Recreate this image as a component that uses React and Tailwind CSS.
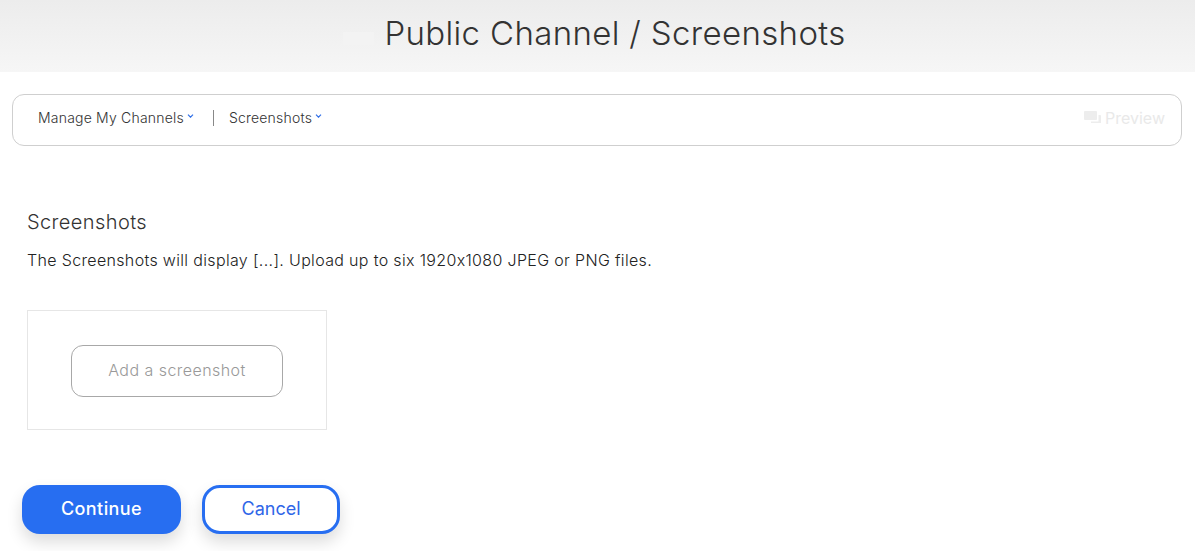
import React from 'react';

const Caret = () => (
  <svg className="ml-[3px] mt-[-3px] h-[4px] w-[7px] text-[#2f6fe8]" viewBox="0 0 7 4" fill="none" stroke="currentColor" strokeWidth="1.2">
    <path d="M1 0.7 3.5 3.2 6 0.7" />
  </svg>
);

const PreviewIcon = () => (
  <svg className="h-[13px] w-[17px] text-[#ededed]" viewBox="0 0 17 13" fill="currentColor">
    <path d="M1 0h11a1 1 0 0 1 1 1v7a1 1 0 0 1-1 1H1a1 1 0 0 1-1-1V1a1 1 0 0 1 1-1z" />
    <path d="M14.5 4H16a1 1 0 0 1 1 1v7H7v-1.5h7.5z" />
  </svg>
);

export default function App() {
  return (
    <div className="h-[551px] w-[1195px] overflow-hidden bg-white font-['Inter','Liberation_Sans',sans-serif] text-[#2d2d2d] [font-feature-settings:'calt'_0]">
      <header className="flex h-[72px] items-start justify-center bg-gradient-to-b from-[#ececec] to-[#f6f6f6] pr-[6px]">
        <div className="mt-[32px] mr-[10px] h-[13px] w-[31px] bg-[#f3f3f3]" />
        <h1 className="mt-[13px] text-[33px] font-light leading-[40px] tracking-[0.35px] text-[#333]">Public Channel / Screenshots</h1>
      </header>

      <nav className="ml-[12px] mr-[13px] mt-[22px] flex h-[52px] items-center justify-between rounded-[12px] border border-[#cfcfcf] pl-[25px] pr-[16px]">
        <div className="mt-[-5px] flex items-center text-[14px] font-light tracking-[0.2px] text-[#333]">
          <span className="flex items-center">Manage My Channels<Caret /></span>
          <span className="ml-[19px] mr-[15px] h-[16px] w-px bg-[#888]" />
          <span className="flex items-center">Screenshots<Caret /></span>
        </div>
        <div className="mt-[-5px] flex items-center gap-[4px] text-[16px] text-[#e9e9e9]">
          <PreviewIcon />
          <span>Preview</span>
        </div>
      </nav>

      <main className="pl-[27px]">
        <h2 className="mt-[64px] text-[20px] font-light leading-[24px] tracking-[0.4px] text-[#333]">Screenshots</h2>
        <p className="mt-[15px] text-[16px] font-light leading-[22px] tracking-[0.34px] text-[#222]">
          The Screenshots will display [...]. Upload up to six 1920x1080 JPEG or PNG files.
        </p>

        <div className="mt-[39px] flex h-[120px] w-[300px] items-center justify-center border border-[#e6e6e6]">
          <button className="mt-[1px] h-[52px] w-[212px] rounded-[12px] border border-[#a8a8a8] pb-[2px] text-[16px] font-light tracking-[0.45px] text-[#999]">
            Add a screenshot
          </button>
        </div>
      </main>

      <div className="mt-[55px] flex gap-[21px] pl-[22px]">
        <button className="h-[49px] w-[159px] rounded-[18px] bg-[#276ef1] pb-[2px] text-[18px] font-medium tracking-[0.4px] text-white shadow-[0_8px_16px_rgba(0,0,0,0.14)]">
          Continue
        </button>
        <button className="h-[49px] w-[138px] rounded-[18px] border-[3px] border-[#276ef1] bg-white pb-[2px] text-[18px] text-[#2f66e8] shadow-[0_8px_16px_rgba(0,0,0,0.14)]">
          Cancel
        </button>
      </div>
    </div>
  );
}
